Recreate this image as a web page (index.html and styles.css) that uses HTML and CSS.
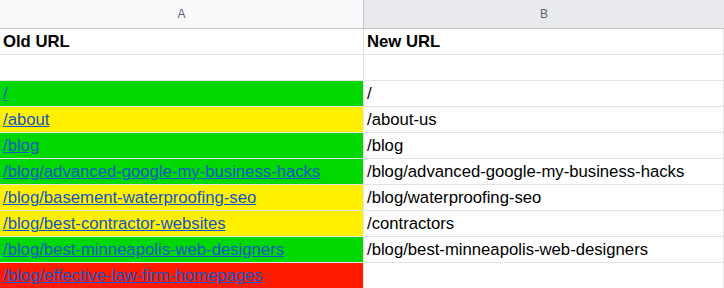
FILE: index.html
```html
<!DOCTYPE html>
<html>
<head>
<meta charset="utf-8">
<link rel="stylesheet" href="styles.css">
</head>
<body>
<div class="sheet">
  <div class="row head">
    <div class="cell colhead">A</div>
    <div class="cell colhead sel">B</div>
  </div>
  <div class="row">
    <div class="cell bold">Old URL</div>
    <div class="cell bold">New URL</div>
  </div>
  <div class="row">
    <div class="cell"></div>
    <div class="cell"></div>
  </div>
  <div class="row">
    <div class="cell green"><a>/</a></div>
    <div class="cell">/</div>
  </div>
  <div class="row">
    <div class="cell yellow"><a>/about</a></div>
    <div class="cell">/about-us</div>
  </div>
  <div class="row">
    <div class="cell green"><a>/blog</a></div>
    <div class="cell">/blog</div>
  </div>
  <div class="row">
    <div class="cell green"><a>/blog/advanced-google-my-business-hacks</a></div>
    <div class="cell">/blog/advanced-google-my-business-hacks</div>
  </div>
  <div class="row">
    <div class="cell yellow"><a>/blog/basement-waterproofing-seo</a></div>
    <div class="cell">/blog/waterproofing-seo</div>
  </div>
  <div class="row">
    <div class="cell yellow"><a>/blog/best-contractor-websites</a></div>
    <div class="cell">/contractors</div>
  </div>
  <div class="row">
    <div class="cell green"><a>/blog/best-minneapolis-web-designers</a></div>
    <div class="cell">/blog/best-minneapolis-web-designers</div>
  </div>
  <div class="row">
    <div class="cell red"><a>/blog/effective-law-firm-homepages</a></div>
    <div class="cell"></div>
  </div>
</div>
</body>
</html>
```
FILE: styles.css
```css
html, body {
  margin: 0;
  padding: 0;
  background: #ffffff;
}
.sheet {
  width: 724px;
  height: 288px;
  overflow: hidden;
  font-family: "Liberation Sans", Arial, sans-serif;
  font-size: 16.7px;
  color: #000;
}
.row {
  display: grid;
  grid-template-columns: 364px 360px;
  height: 26px;
  border-bottom: 1px solid #e2e3e3;
  box-sizing: border-box;
}
.cell {
  border-right: 1px solid #e2e3e3;
  padding: 1px 3px 0;
  display: flex;
  align-items: center;
  white-space: nowrap;
  overflow: hidden;
}
.head {
  height: 29px;
  border-bottom: 1px solid #c4c7c5;
}
.colhead {
  justify-content: center;
  background: #f8f9fa;
  color: #5f6368;
  font-size: 12px;
  padding: 0;
  border-right: 1px solid #c4c7c5;
}
.colhead.sel {
  background: #e8eaed;
  border-right: none;
}
.bold {
  font-weight: bold;
}
.green { background: #00d800; }
.yellow { background: #fff000; }
.red { background: #ff1a00; }
a {
  color: #1155cc;
  text-decoration: underline;
}
```
